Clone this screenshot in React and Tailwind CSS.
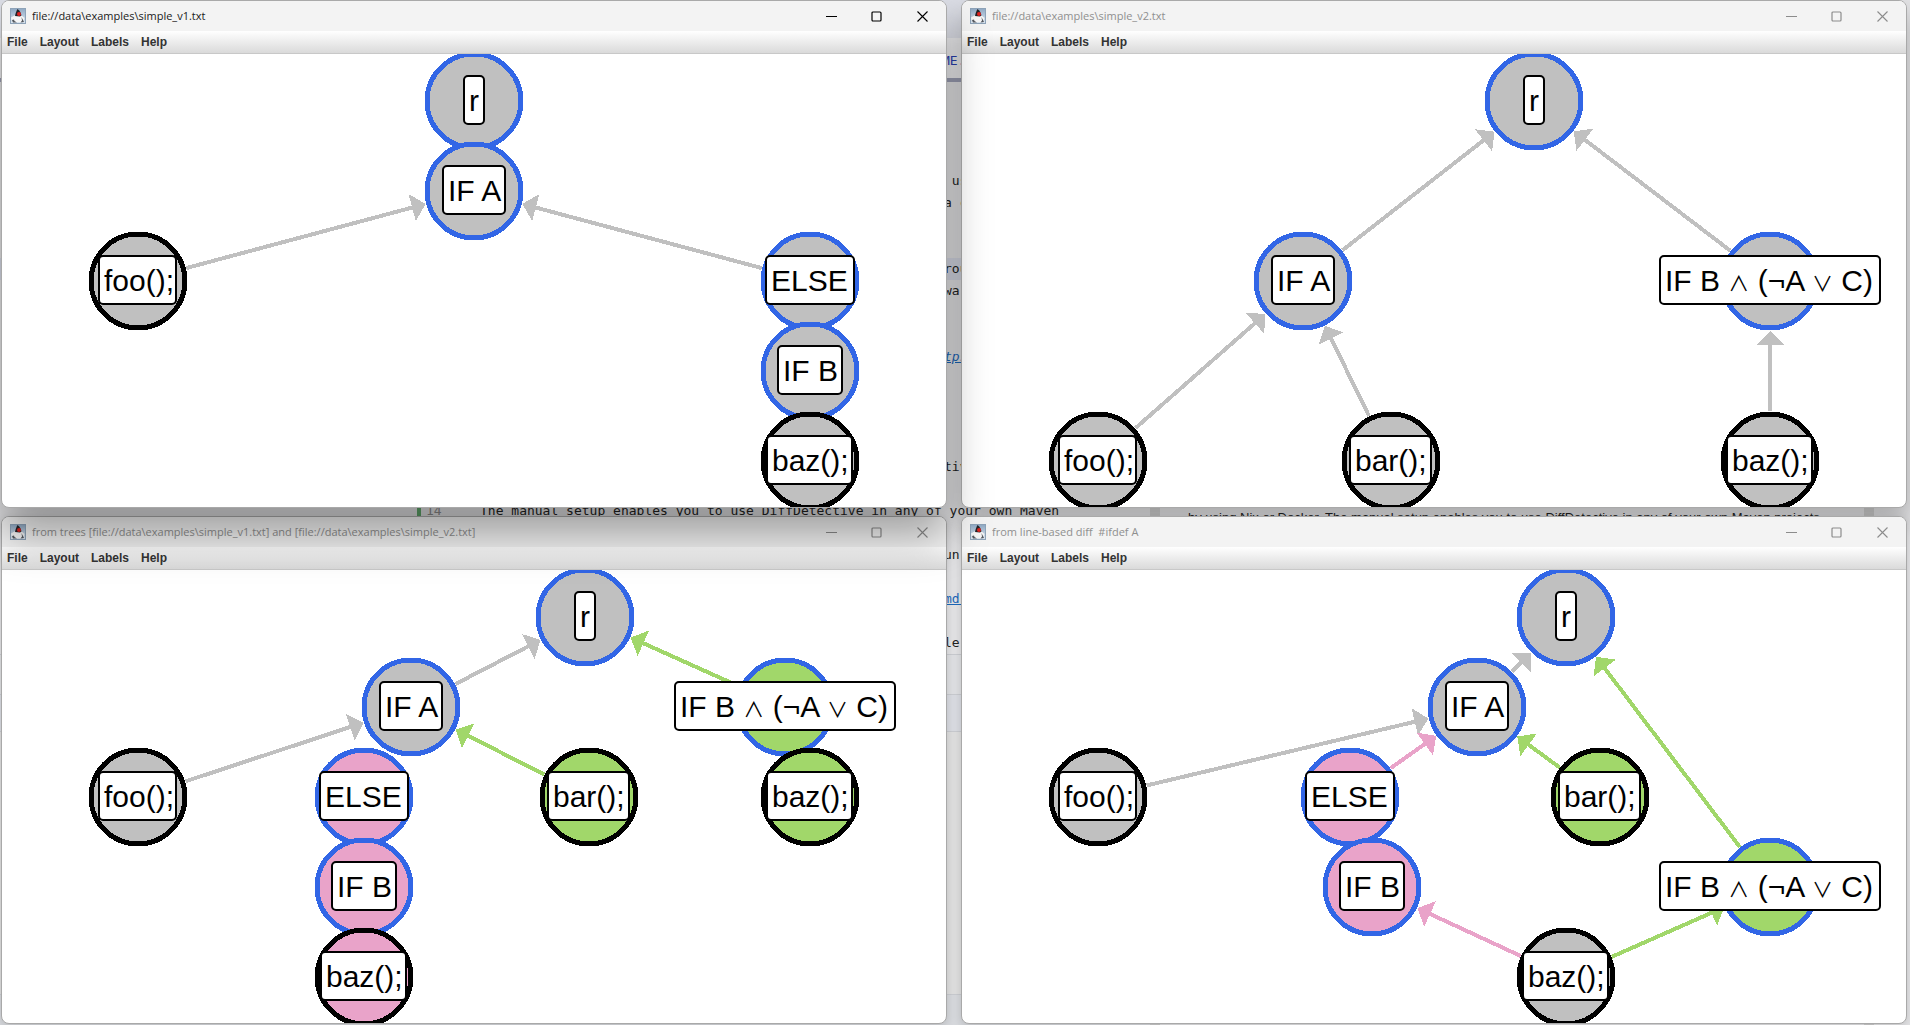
import React from "react";

const GRAY = "#c0c0c0";
const GREEN = "#a1d76a";
const PINK = "#e9a3c9";
const BLUE = "#3266e6";
const BLACK = "#000000";

const LABEL_WIDTH = {
  r: 20,
  "IF A": 62,
  "IF B": 64,
  ELSE: 88,
  "foo();": 77,
  "bar();": 81,
  "baz();": 85,
  "IF B ∧ (¬A ∨ C)": 220,
};

const LONG = "IF B ∧ (¬A ∨ C)";

const graphs = {
  v1: {
    nodes: [
      { id: "r", x: 472, y: 47, label: "r", fill: GRAY, ring: BLUE },
      { id: "a", x: 472, y: 137, label: "IF A", fill: GRAY, ring: BLUE },
      { id: "foo", x: 136, y: 227, label: "foo();", fill: GRAY, ring: BLACK },
      { id: "else", x: 808, y: 227, label: "ELSE", fill: GRAY, ring: BLUE },
      { id: "b", x: 808, y: 317, label: "IF B", fill: GRAY, ring: BLUE },
      { id: "baz", x: 808, y: 407, label: "baz();", fill: GRAY, ring: BLACK },
    ],
    edges: [
      ["foo", "a", GRAY],
      ["else", "a", GRAY],
    ],
  },
  v2: {
    nodes: [
      { id: "r", x: 572, y: 47, label: "r", fill: GRAY, ring: BLUE },
      { id: "a", x: 341, y: 227, label: "IF A", fill: GRAY, ring: BLUE },
      { id: "b", x: 808, y: 227, label: LONG, fill: GRAY, ring: BLUE },
      { id: "foo", x: 136, y: 407, label: "foo();", fill: GRAY, ring: BLACK },
      { id: "bar", x: 429, y: 407, label: "bar();", fill: GRAY, ring: BLACK },
      { id: "baz", x: 808, y: 407, label: "baz();", fill: GRAY, ring: BLACK },
    ],
    edges: [
      ["a", "r", GRAY],
      ["b", "r", GRAY],
      ["foo", "a", GRAY],
      ["bar", "a", GRAY],
      ["baz", "b", GRAY],
    ],
  },
  trees: {
    nodes: [
      { id: "r", x: 583, y: 47, label: "r", fill: GRAY, ring: BLUE },
      { id: "a", x: 409, y: 137, label: "IF A", fill: GRAY, ring: BLUE },
      { id: "c", x: 783, y: 137, label: LONG, fill: GREEN, ring: BLUE },
      { id: "foo", x: 136, y: 227, label: "foo();", fill: GRAY, ring: BLACK },
      { id: "else", x: 362, y: 227, label: "ELSE", fill: PINK, ring: BLUE },
      { id: "bar", x: 587, y: 227, label: "bar();", fill: GREEN, ring: BLACK },
      { id: "baz2", x: 808, y: 227, label: "baz();", fill: GREEN, ring: BLACK },
      { id: "b", x: 362, y: 317, label: "IF B", fill: PINK, ring: BLUE },
      { id: "baz", x: 362, y: 407, label: "baz();", fill: PINK, ring: BLACK },
    ],
    edges: [
      ["a", "r", GRAY],
      ["c", "r", GREEN],
      ["foo", "a", GRAY],
      ["bar", "a", GREEN],
    ],
  },
  diff: {
    nodes: [
      { id: "r", x: 604, y: 47, label: "r", fill: GRAY, ring: BLUE },
      { id: "a", x: 515, y: 137, label: "IF A", fill: GRAY, ring: BLUE },
      { id: "foo", x: 136, y: 227, label: "foo();", fill: GRAY, ring: BLACK },
      { id: "else", x: 388, y: 227, label: "ELSE", fill: PINK, ring: BLUE },
      { id: "bar", x: 638, y: 227, label: "bar();", fill: GREEN, ring: BLACK },
      { id: "b", x: 410, y: 317, label: "IF B", fill: PINK, ring: BLUE },
      { id: "c", x: 808, y: 317, label: LONG, fill: GREEN, ring: BLUE },
      { id: "baz", x: 604, y: 407, label: "baz();", fill: GRAY, ring: BLACK },
    ],
    edges: [
      ["a", "r", GRAY],
      ["c", "r", GREEN],
      ["foo", "a", GRAY],
      ["else", "a", PINK],
      ["bar", "a", GREEN],
      ["baz", "b", PINK],
      ["baz", "c", GREEN],
    ],
  },
};

function Edge({ from, to, color }) {
  const dx = to.x - from.x;
  const dy = to.y - from.y;
  const len = Math.hypot(dx, dy);
  const ux = dx / len;
  const uy = dy / len;
  const tip = [to.x - ux * 50, to.y - uy * 50];
  const base = [tip[0] - ux * 14, tip[1] - uy * 14];
  const start = [from.x + ux * 50, from.y + uy * 50];
  const corners = [
    tip,
    [base[0] - uy * 14, base[1] + ux * 14],
    [base[0] + uy * 14, base[1] - ux * 14],
  ];
  return (
    <g>
      <line x1={start[0]} y1={start[1]} x2={base[0]} y2={base[1]} stroke={color} strokeWidth="4" />
      <polygon points={corners.map((p) => p.join(",")).join(" ")} fill={color} />
    </g>
  );
}

function Node({ x, y, label, fill, ring }) {
  const w = LABEL_WIDTH[label];
  const left = x - Math.round(w / 2);
  return (
    <g>
      <circle cx={x} cy={y} r="47" fill={fill} stroke={ring} strokeWidth="5" shapeRendering="crispEdges" />
      <rect x={left} y={y - 25} width={w} height="48" rx="4" fill="#fff" stroke="#000" strokeWidth="2" />
      <text x={left + 5} y={y + 10} fontSize="30" className="font-['Liberation_Sans',Arial,sans-serif]">
        {label.split(/([∧∨])/).map((part, i) =>
          part === "∧" || part === "∨" ? (
            <tspan key={i} fontSize="21" className="font-['Noto_Sans_CJK_JP',sans-serif]">{part}</tspan>
          ) : (
            part
          )
        )}
      </text>
    </g>
  );
}

function Graph({ graph, name }) {
  const byId = Object.fromEntries(graph.nodes.map((n) => [n.id, n]));
  return (
    <svg className="block min-h-0 w-full flex-1" role="img" aria-label={name}>
      <g shapeRendering="crispEdges">
        {graph.edges.map(([from, to, color]) => (
          <Edge key={from + to} from={byId[from]} to={byId[to]} color={color} />
        ))}
      </g>
      {graph.nodes.map((n) => (
        <Node key={n.id} {...n} />
      ))}
    </svg>
  );
}

function DukeIcon() {
  return (
    <svg className="size-4 shrink-0" viewBox="0 0 16 16" aria-hidden="true">
      <defs>
        <linearGradient id="duke-sky" x1="0" y1="0" x2="0" y2="1">
          <stop offset="0" stopColor="#8fa9c4" />
          <stop offset="1" stopColor="#dfe8f1" />
        </linearGradient>
      </defs>
      <rect x="0.5" y="0.5" width="15" height="15" fill="url(#duke-sky)" stroke="#8ea3b8" />
      <path d="M1 9.500 L4.500 7.500 L7 7 L11 7 L14.500 10 L13.500 12.500 L12.500 14 L4 14 L3.500 12 L1.500 12.500Z" fill="#f6f6f6" />
      <path d="M7.500 1 C9.500 2.500 11 4.500 11.500 7.500 L10 8.500 L5 8 C5.500 5 6.500 3 7.500 1Z" fill="#222227" />
      <path d="M2 12 L4 11.500 L4.500 13 L7 14.500 L3 14.500Z M11.500 9 L13 12 L14 14 L10.500 14.500 L12 12.500Z" fill="#55585e" />
      <circle cx="9" cy="6" r="2" fill="#e0221e" />
    </svg>
  );
}

function Controls({ active }) {
  const tone = active ? "text-black" : "text-[#8c8c8c]";
  return (
    <div className={`flex ${tone}`}>
      <button type="button" aria-label="Minimize" className="flex h-[30px] w-[45px] items-center justify-center">
        <svg className="size-[11px]" viewBox="0 0 11 11"><path d="M0 5.500h11" stroke="currentColor" /></svg>
      </button>
      <button type="button" aria-label="Maximize" className="flex h-[30px] w-[45px] items-center justify-center">
        <svg className="size-[11px]" viewBox="0 0 11 11"><rect x="1" y="1" width="9" height="9" rx="1" fill="none" stroke="currentColor" strokeWidth="1.200" /></svg>
      </button>
      <button type="button" aria-label="Close" className="flex h-[30px] w-[47px] items-center justify-center">
        <svg className="size-[11px]" viewBox="0 0 11 11"><path d="M.5.5l10 10M10.500.5l-10 10" stroke="currentColor" strokeWidth="1.100" /></svg>
      </button>
    </div>
  );
}

function Window({ title, graph, active, className }) {
  return (
    <section className={`relative flex min-w-0 flex-col overflow-hidden rounded-lg border border-[#a9a9a9] bg-white ${className}`}>
      <header className="flex h-[30px] shrink-0 items-center bg-[#f3f3f3] pl-2">
        <DukeIcon />
        <h2 className={`ml-[6px] flex-1 truncate font-['Open_Sans','Noto_Sans',sans-serif] text-[11px] leading-4 whitespace-pre ${active ? "text-[#1a1a1a]" : "text-[#8f8f8f]"}`}>
          {title}
        </h2>
        <Controls active={active} />
      </header>
      <nav className="flex h-[23px] shrink-0 items-center gap-3 border-b border-[#c8c8c8] bg-linear-to-b from-white to-[#dadada] pl-[5px] font-['Liberation_Sans',Arial,sans-serif] text-[12px] leading-4 font-bold text-[#333]">
        {["File", "Layout", "Labels", "Help"].map((m) => (
          <button key={m} type="button">{m}</button>
        ))}
      </nav>
      <Graph graph={graph} name={title} />
    </section>
  );
}

const FRAGMENTS = {
  0: " us",
  1: "a c",
  4: "rou",
  5: "war",
  8: "tps",
  13: "tiv",
  17: "un",
  19: "md]",
  21: "le",
};

function EditorRow({ index }) {
  if (index === 15) {
    return (
      <div className="flex h-[22px] pl-[417px]">
        <span className="w-1 bg-[#5fa56a]" />
        <span className="w-[59px] pl-[5px] text-[#8b8b8b]">14</span>
        <span>The manual setup enables you to use DiffDetective in any of your own Maven</span>
      </div>
    );
  }
  const link = index === 8 || index === 19;
  return (
    <div className={`h-[22px] pl-[944px] ${index === 4 ? "bg-[#d3d6e2]" : ""}`}>
      {link ? (
        <a href="#docs" className={`text-[#1a66b8] underline ${index === 8 ? "italic" : ""}`}>{FRAGMENTS[index]}</a>
      ) : (
        FRAGMENTS[index]
      )}
    </div>
  );
}

function Backdrop() {
  return (
    <div className="absolute inset-0 flex overflow-hidden bg-[#e2e2e4]">
      <div className="flex w-[1150px] shrink-0 flex-col font-['DejaVu_Sans_Mono',monospace] text-[13px] leading-[22px] whitespace-pre text-[#222]">
        <div className="h-[38px] bg-[#dcdee6]" />
        <div className="h-[40px] bg-[#ececee] pt-3 pl-[942px] text-[#2a3fae]">ME.</div>
        <div className="h-1 bg-[#9a9db2]" />
        <div className="h-[88px]" />
        {Array.from({ length: 22 }, (_, i) => (
          <EditorRow key={i} index={i} />
        ))}
        <div className="h-[41px] border-y border-[#c8cacf] bg-[#dedfe2]" />
        <div className="h-[36px] bg-[#d9dbe1]" />
        <div className="h-[264px] border-y border-[#c8cacf] bg-[#dedede]" />
        <div className="flex-1 bg-[#d6d8dc]" />
      </div>
      <div className="w-[10px] bg-[#cbcbcb]" />
      <p className="mt-[508px] flex-1 pl-7 font-['Liberation_Sans',Arial,sans-serif] text-[13px] leading-5 whitespace-pre text-[#222]">
        by using Nix or Docker. The manual setup enables you to use DiffDetective in any of your own Maven projects
      </p>
      <div className="mr-9 w-[10px] bg-[#cbcbcb]" />
    </div>
  );
}

export default function App() {
  return (
    <main className="relative h-screen overflow-hidden">
      <Backdrop />
      <div className="relative grid h-full grid-cols-2 grid-rows-2 gap-x-[14px] gap-y-2 pr-[3px] pb-px pl-px">
        <Window title="file://data\examples\simple_v1.txt" graph={graphs.v1} active className="z-30 shadow-[0_28px_44px_rgba(0,0,0,0.35)]" />
        <Window title="file://data\examples\simple_v2.txt" graph={graphs.v2} className="z-10 shadow-[0_14px_24px_rgba(0,0,0,0.25)]" />
        <Window title="from trees [file://data\examples\simple_v1.txt] and [file://data\examples\simple_v2.txt]" graph={graphs.trees} className="z-10 shadow-[0_2px_8px_rgba(0,0,0,0.15)]" />
        <Window title="from line-based diff  #ifdef A" graph={graphs.diff} className="z-20 shadow-[0_2px_8px_rgba(0,0,0,0.15)]" />
      </div>
    </main>
  );
}
